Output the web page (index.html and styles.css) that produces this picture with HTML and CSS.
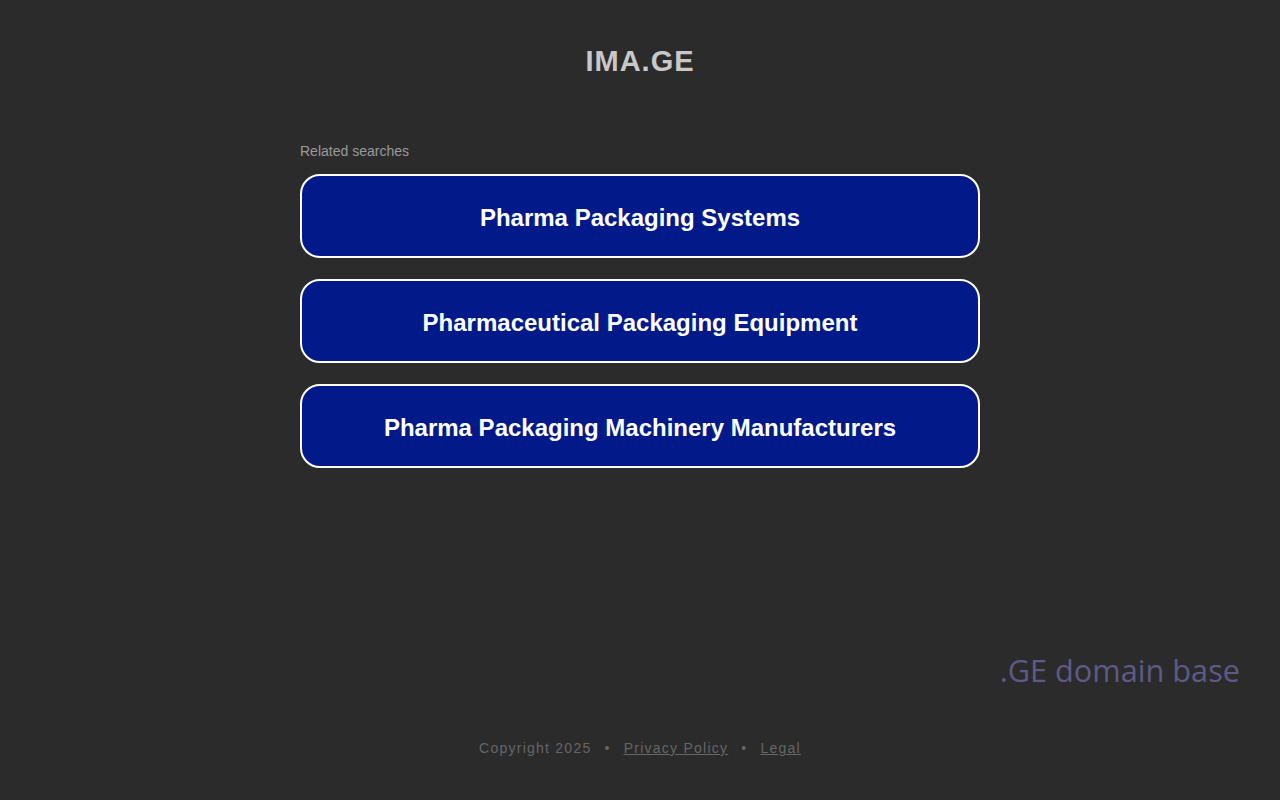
FILE: index.html
```html
<!DOCTYPE html>
<html>
<head>
<meta charset="utf-8">
<link rel="stylesheet" href="styles.css">
</head>
<body>
<div class="page">
  <header class="header"><h1 class="title">IMA.GE</h1></header>
  <main class="main">
    <div class="related">Related searches</div>
    <div class="list">
      <a class="btn" href="#">Pharma Packaging Systems</a>
      <a class="btn" href="#">Pharmaceutical Packaging Equipment</a>
      <a class="btn" href="#">Pharma Packaging Machinery Manufacturers</a>
    </div>
  </main>
  <div class="brand-row"><span class="brand">.GE domain base</span></div>
  <footer class="footer">
    <span>Copyright 2025</span><span class="dot">•</span><a href="#">Privacy Policy</a><span class="dot">•</span><a href="#">Legal</a>
  </footer>
</div>
</body>
</html>
```
FILE: styles.css
```css
html, body { margin: 0; padding: 0; background: #2b2b2b; }
body { font-family: "Liberation Sans", Arial, sans-serif; width: 1280px; height: 800px; overflow: hidden; }
.page { display: flex; flex-direction: column; height: 800px; }
.header { display: flex; justify-content: center; padding-top: 43px; }
.title { margin: 0; font-size: 29px; line-height: 36px; font-weight: bold; color: #c8c8c8; letter-spacing: 1px; }
.main { width: 680px; margin: 0 auto; padding-top: 64px; }
.related { font-size: 14px; line-height: 16px; color: #9a9a9a; margin-bottom: 15px; }
.list { display: flex; flex-direction: column; gap: 21px; }
.btn { display: flex; align-items: center; justify-content: center; box-sizing: border-box; height: 84px; padding-top: 3px; border: 2px solid #ffffff; border-radius: 20px; background: #021a89; color: #ffffff; font-size: 24px; font-weight: bold; text-decoration: none; }
.brand-row { display: flex; justify-content: flex-end; padding-right: 40px; margin-top: 182px; }
.brand { font-family: "Open Sans", sans-serif; font-size: 30.7px; line-height: 40px; color: #5e5a86; }
.footer { display: flex; justify-content: center; align-items: center; margin-top: 50px; font-size: 14px; letter-spacing: 1.25px; color: #666666; }
.footer a { color: #666666; text-decoration: underline; }
.dot { margin: 0 13px; }
```
